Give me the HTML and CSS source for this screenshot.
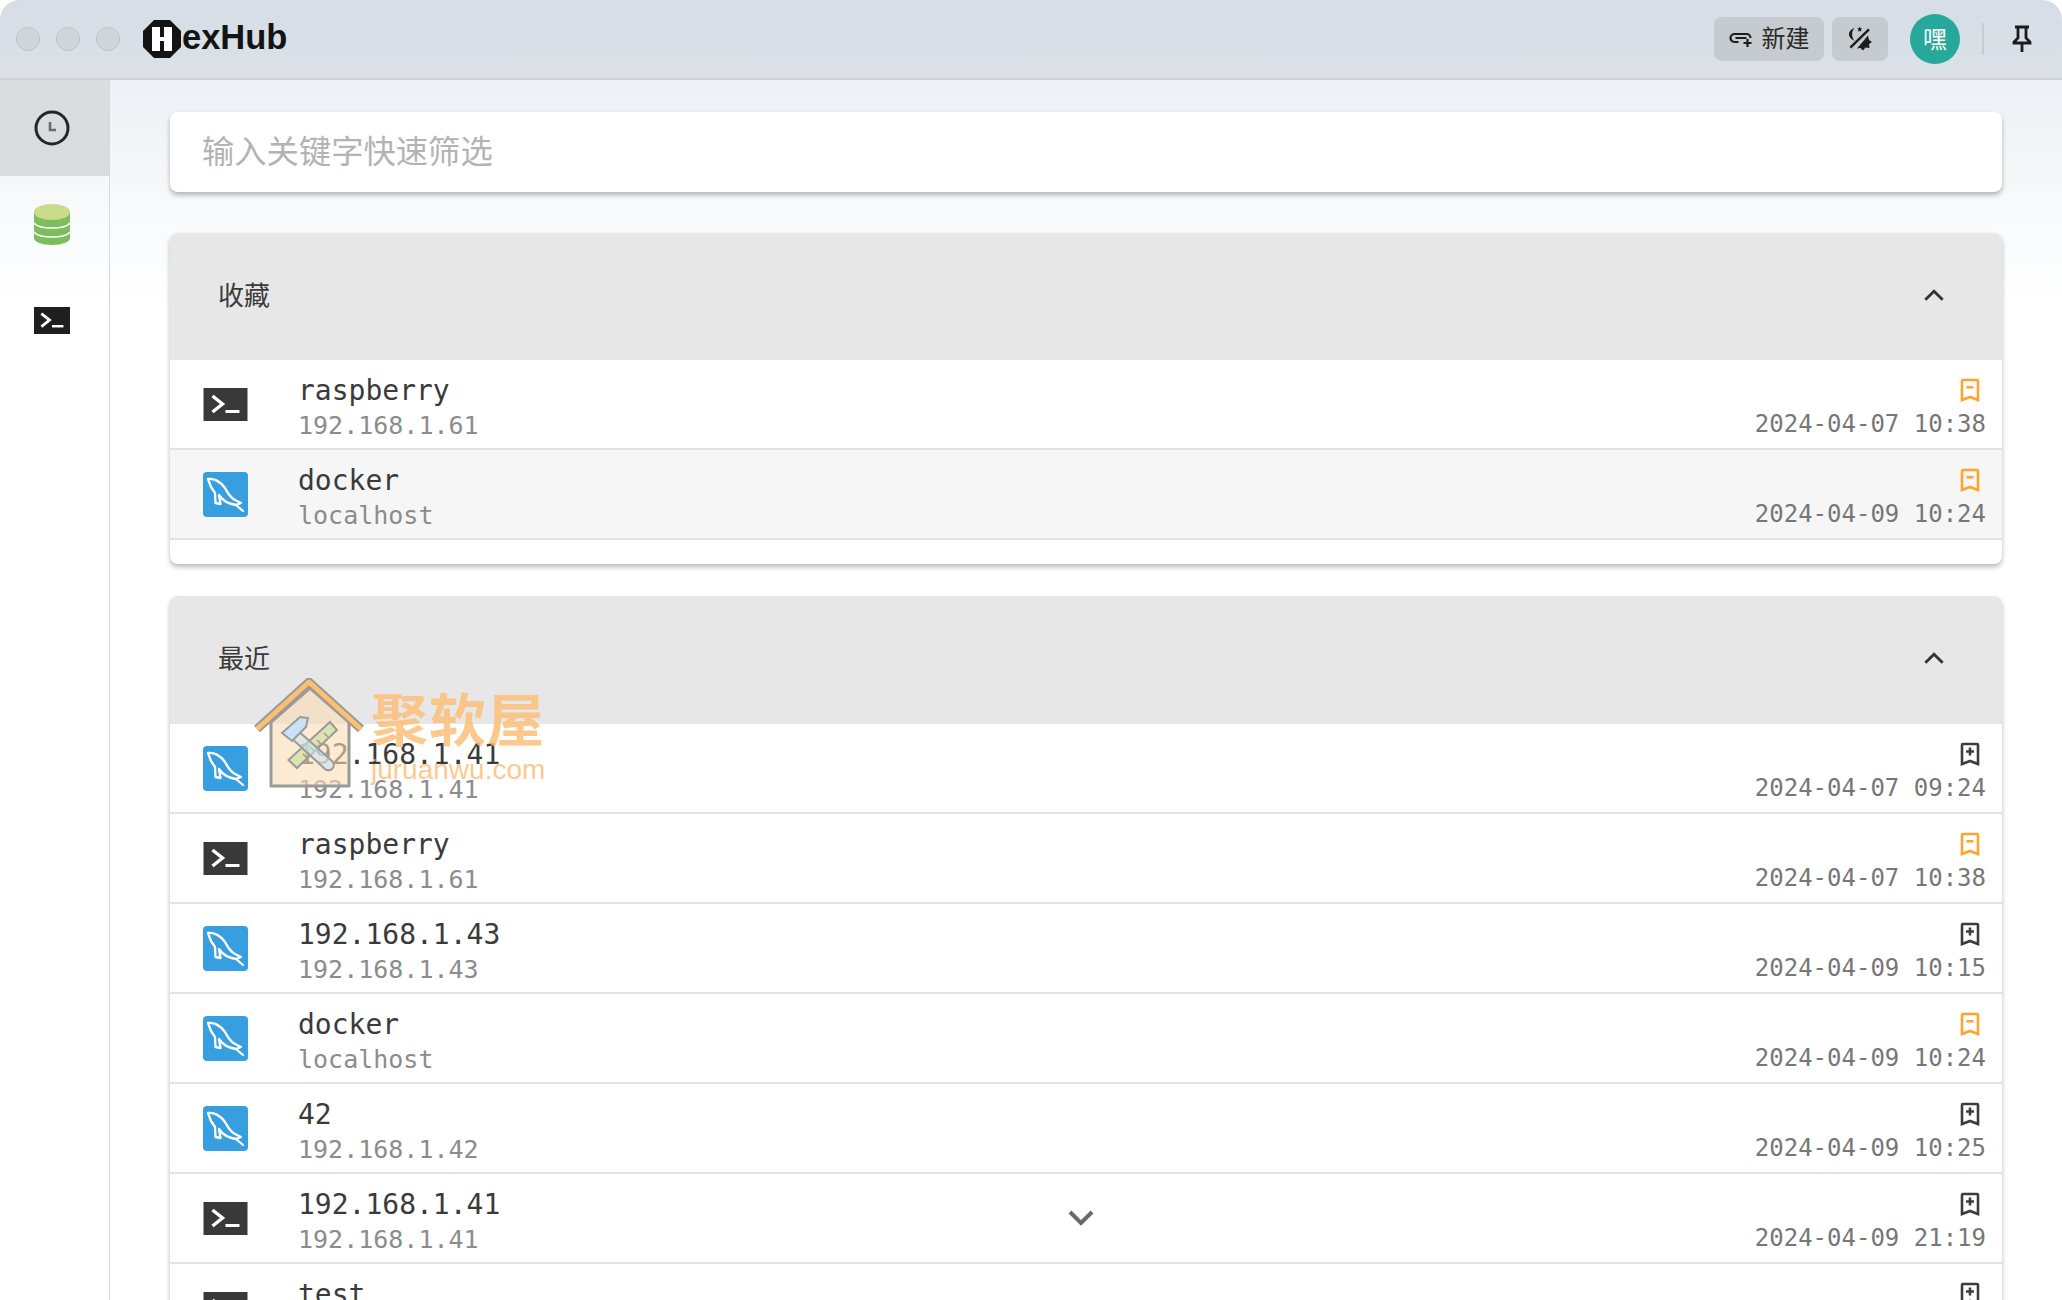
FILE: index.html
```html
<!DOCTYPE html>
<html lang="en">
  <head>
    <meta charset="UTF-8" />
    <title>HexHub</title>
    <link rel="stylesheet" href="styles.css">
  </head>
  <body>
    <svg class="defs" width="0" height="0">
      <symbol id="i-term" viewBox="0 0 44 33">
        <rect width="44" height="33" fill="currentColor"/>
        <path d="M9 8l10 8-10 8" fill="none" stroke="#fff" stroke-width="3.400"/>
        <rect x="22" y="22" width="14" height="3" fill="#fff"/>
      </symbol>
      <symbol id="i-mysql" viewBox="0 0 45 45">
        <rect width="45" height="45" rx="4" fill="#379fdf"/>
        <path d="M5 7C11 6 18 10 22 16C25 21 27 26 33 28.500L38 31L33 33L40 39M5 7L8 15L12 21L12.500 31L17.500 32L16 23C20 29 26 32 33 33" fill="none" stroke="#fff" stroke-width="2.300" stroke-linejoin="round" stroke-linecap="round"/>
      </symbol>
      <symbol id="i-unmark" viewBox="0 0 20 24">
        <path d="M2 22V3q0-1 1-1h14q1 0 1 1v19l-8-3z" fill="none" stroke="#ffa42e" stroke-width="2.600"/>
        <rect x="6.500" y="8" width="7" height="2.600" fill="#ffa42e"/>
      </symbol>
      <symbol id="i-mark" viewBox="0 0 20 24">
        <path d="M2 22V3q0-1 1-1h14q1 0 1 1v19l-8-3z" fill="none" stroke="#3c3c3c" stroke-width="2.600"/>
        <path d="M6 9.500h8M10 5.500v8" stroke="#3c3c3c" stroke-width="2.600"/>
      </symbol>
    </svg>

    <div class="window">
      <header class="titlebar">
        <div class="traffic">
          <span class="dot"></span>
          <span class="dot"></span>
          <span class="dot"></span>
        </div>
        <div class="brand">
          <svg class="brand-mark" viewBox="0 0 38 38" width="38" height="38">
            <path d="M11 0h16l11 11v16L27 38H11L0 27V11z" fill="#141414"/>
            <path d="M9 7h8v10h4V7h8v24h-8V21h-4v10H9z" fill="#fff"/>
          </svg>
          <span class="brand-name">exHub</span>
        </div>
        <div class="actions">
          <button class="tool-btn new-btn">
            <svg width="25" height="18" viewBox="0 0 24 18" fill="none" stroke="#1c1c1c" stroke-width="2.200">
              <path d="M9 12H5a4 4 0 0 1 0-8h12a4 4 0 0 1 4 4"/>
              <path d="M6 8h11M18 9v8M14 13h8"/>
            </svg>
            <span>新建</span>
          </button>
          <button class="tool-btn theme-btn">
            <svg width="26" height="26" viewBox="0 0 26 26">
              <path d="M3.300 21.700L22 3.300" stroke="#1c1c1c" stroke-width="2.400" fill="none"/>
              <path d="M7.700 1.700C1 4 -1 11 7.700 15C4 11 4.500 5 7.700 1.700z" fill="#1c1c1c"/>
              <path d="M12.700 .5l.8 1.800 1.800.2-1.400 1.200.5 2-1.700-1-1.700 1 .5-2-1.400-1.200 1.800-.2z" fill="#1c1c1c"/>
              <path d="M21 9.500L22 14L25 16L22 18L22.500 22L18.500 21.500L16 24.500L13.500 22L10 22.500z" fill="#1c1c1c"/>
            </svg>
          </button>
          <span class="avatar"><span>嘿</span></span>
          <span class="vline"></span>
          <svg class="pin" width="20" height="28" viewBox="0 0 20 28" fill="none" stroke="#1c1c1c" stroke-width="2.800">
            <path d="M3 2h14M6 2v11l-4 4v1h16v-1l-4-4V2M10 18v9"/>
          </svg>
        </div>
      </header>

      <div class="body">
        <nav class="sidebar">
          <div class="side-item active">
            <svg width="36" height="36" viewBox="0 0 36 36" fill="none">
              <circle cx="18" cy="18" r="16" stroke="#262626" stroke-width="3"/>
              <path d="M16 12v8h6" stroke="#6a6a6a" stroke-width="2.600"/>
            </svg>
          </div>
          <div class="side-item">
            <svg width="36" height="41" viewBox="0 0 36 41">
              <path d="M0 7v27c0 4 8 7 18 7s18-3 18-7V7z" fill="#7dbd5c"/>
              <ellipse cx="18" cy="8" rx="18" ry="8" fill="#cadb8c"/>
              <path d="M0 19c3 4 10 5 18 5s15-1 18-5M0 28c3 4 10 5 18 5s15-1 18-5" fill="none" stroke="#fff" stroke-width="1.500"/>
            </svg>
          </div>
          <div class="side-item">
            <svg class="side-term" width="36" height="27"><use href="#i-term"/></svg>
          </div>
        </nav>

        <main class="content">
          <div class="search">
            <input class="search-input" type="text" placeholder="输入关键字快速筛选" />
          </div>

          <section class="group fav">
            <div class="group-head">
              <span>收藏</span>
              <svg class="chev" width="22" height="13" viewBox="0 0 20 12" fill="none" stroke="#333" stroke-width="2.600"><path d="M2 10l8-8 8 8"/></svg>
            </div>
            <div class="row">
              <svg class="type-icon"><use href="#i-term" y="6" height="33"/></svg>
              <div class="names"><div class="name">raspberry</div><div class="host">192.168.1.61</div></div>
              <div class="meta"><svg class="mark"><use href="#i-unmark"/></svg><div class="time">2024-04-07 10:38</div></div>
            </div>
            <div class="row hover">
              <svg class="type-icon"><use href="#i-mysql"/></svg>
              <div class="names"><div class="name">docker</div><div class="host">localhost</div></div>
              <div class="meta"><svg class="mark"><use href="#i-unmark"/></svg><div class="time">2024-04-09 10:24</div></div>
            </div>
          </section>

          <section class="group recent">
            <div class="group-head">
              <span>最近</span>
              <svg class="chev" width="22" height="13" viewBox="0 0 20 12" fill="none" stroke="#333" stroke-width="2.600"><path d="M2 10l8-8 8 8"/></svg>
            </div>
            <div class="row">
              <svg class="type-icon"><use href="#i-mysql"/></svg>
              <div class="names"><div class="name">192.168.1.41</div><div class="host">192.168.1.41</div></div>
              <div class="meta"><svg class="mark"><use href="#i-mark"/></svg><div class="time">2024-04-07 09:24</div></div>
            </div>
            <div class="row">
              <svg class="type-icon"><use href="#i-term" y="6" height="33"/></svg>
              <div class="names"><div class="name">raspberry</div><div class="host">192.168.1.61</div></div>
              <div class="meta"><svg class="mark"><use href="#i-unmark"/></svg><div class="time">2024-04-07 10:38</div></div>
            </div>
            <div class="row">
              <svg class="type-icon"><use href="#i-mysql"/></svg>
              <div class="names"><div class="name">192.168.1.43</div><div class="host">192.168.1.43</div></div>
              <div class="meta"><svg class="mark"><use href="#i-mark"/></svg><div class="time">2024-04-09 10:15</div></div>
            </div>
            <div class="row">
              <svg class="type-icon"><use href="#i-mysql"/></svg>
              <div class="names"><div class="name">docker</div><div class="host">localhost</div></div>
              <div class="meta"><svg class="mark"><use href="#i-unmark"/></svg><div class="time">2024-04-09 10:24</div></div>
            </div>
            <div class="row">
              <svg class="type-icon"><use href="#i-mysql"/></svg>
              <div class="names"><div class="name">42</div><div class="host">192.168.1.42</div></div>
              <div class="meta"><svg class="mark"><use href="#i-mark"/></svg><div class="time">2024-04-09 10:25</div></div>
            </div>
            <div class="row">
              <svg class="type-icon"><use href="#i-term" y="6" height="33"/></svg>
              <div class="names"><div class="name">192.168.1.41</div><div class="host">192.168.1.41</div></div>
              <div class="meta"><svg class="mark"><use href="#i-mark"/></svg><div class="time">2024-04-09 21:19</div></div>
            </div>
            <div class="row">
              <svg class="type-icon"><use href="#i-term" y="6" height="33"/></svg>
              <div class="names"><div class="name">test</div><div class="host">192.168.1.41</div></div>
              <div class="meta"><svg class="mark"><use href="#i-mark"/></svg><div class="time">2024-04-09 21:20</div></div>
            </div>
          </section>
        </main>
      </div>

      <svg class="scroll-more" width="28" height="18" viewBox="0 0 28 18" fill="none" stroke="#6a6a6a" stroke-width="4"><path d="M3 3l11 11L25 3"/></svg>

      <div class="watermark">
        <svg class="wm-house" width="116" height="112" viewBox="0 0 116 112">
          <path d="M19 44v64h78V44L58 10z" fill="#fbdcb4" fill-opacity=".6" stroke="#9a9a9a" stroke-width="3" stroke-linejoin="round"/>
          <path d="M5 51L57 4l52 47" fill="none" stroke="#9a9a9a" stroke-width="9" stroke-linejoin="round"/>
          <path d="M5 51L57 4l52 47" fill="none" stroke="#fdbf70" stroke-width="5" stroke-linejoin="round"/>
          <path d="M78 44l7 8-40 38-8.500-8z" fill="#c4dd96" fill-opacity=".6" stroke="#9a9a9a" stroke-width="2"/>
          <path d="M72 55l4 4M65 62l4 4M58 69l4 4M51 76l4 4" stroke="#9a9a9a" stroke-width="1.500"/>
          <path d="M44 51l36 32a5 5 0 0 1-7 8L37 58z" fill="#c9e3f5" fill-opacity=".6" stroke="#9a9a9a" stroke-width="2"/>
          <path d="M30 55l18-16 8 1-2 9-14 14z" fill="#c9e3f5" stroke="#9a9a9a" stroke-width="2"/>
        </svg>
        <div class="wm-text">
          <div class="wm-cn">聚软屋</div>
          <div class="wm-en">juruanwu.com</div>
        </div>
      </div>
    </div>
  </body>
</html>
```

FILE: styles.css
```css
html,
body {
  height: 100%;
  margin: 0;
}

body {
  background-color: #fff;
  overflow: hidden;
  font-family: "Noto Sans CJK SC", "Noto Sans", sans-serif;
}

.defs {
  position: absolute;
}

.window {
  position: relative;
  height: 1300px;
  overflow: hidden;
  border-radius: 20px 20px 0 0;
  background: linear-gradient(#edf1f5 80px, #ffffff 300px);
}

.titlebar {
  display: flex;
  align-items: center;
  height: 78px;
  padding: 0 30px 0 16px;
  background: linear-gradient(#d6dde5, #dbe1e7);
  border-bottom: 2px solid #d2d2d2;
}

.traffic {
  display: flex;
  gap: 16px;
}

.dot {
  width: 24px;
  height: 24px;
  box-sizing: border-box;
  border-radius: 50%;
  background-color: #d0d5d9;
  border: 1px solid #bcc2c6;
}

.brand {
  display: flex;
  align-items: center;
  margin-left: 23px;
}

.brand-name {
  margin: 0 0 3px 1px;
  font-family: "Liberation Sans", sans-serif;
  font-size: 34.500px;
  font-weight: 700;
  color: #141414;
}

.actions {
  display: flex;
  align-items: center;
  margin-left: auto;
}

.tool-btn {
  display: flex;
  align-items: center;
  justify-content: center;
  height: 44px;
  border: none;
  border-radius: 8px;
  background-color: #c5cbce;
  color: #2a2a2a;
  font-family: inherit;
  font-size: 24px;
}

.new-btn {
  gap: 8px;
  width: 110px;
  padding: 0;
}

.new-btn span {
  margin-bottom: 5px;
}

.theme-btn {
  width: 56px;
  margin-left: 8px;
  padding: 0;
}

.avatar {
  display: flex;
  align-items: center;
  justify-content: center;
  width: 50px;
  height: 50px;
  margin-left: 22px;
  border-radius: 50%;
  background-color: #26a99a;
  color: #fff;
  font-size: 24px;
}

.avatar span {
  margin-bottom: 4px;
}

.vline {
  width: 2px;
  height: 32px;
  margin: 0 28px 0 22px;
  background-color: #c8cccf;
}

.body {
  display: flex;
  height: 1220px;
}

.sidebar {
  flex: none;
  width: 109px;
  border-right: 1px solid #d9d9d9;
}

.side-item {
  display: flex;
  align-items: center;
  justify-content: center;
  height: 96px;
  padding-right: 5px;
  box-sizing: border-box;
}

.side-item.active {
  background-color: #dadde0;
}

.side-term {
  color: #1f1f1f;
}

.content {
  flex: 1;
  padding: 32px 60px 0 60px;
  min-width: 0;
}

.search {
  height: 80px;
  margin-bottom: 41px;
  border-radius: 8px;
  background-color: #fff;
  box-shadow: 0 3px 5px rgba(0, 0, 0, 0.28);
}

.search-input {
  width: 100%;
  height: 100%;
  box-sizing: border-box;
  padding: 0 32px 7px;
  border: none;
  outline: none;
  background: transparent;
  font-family: inherit;
  font-size: 32.300px;
}

.search-input::placeholder {
  color: #b3b3b3;
}

.group {
  margin-bottom: 32px;
  padding-bottom: 24px;
  border-radius: 8px;
  background-color: #fff;
  box-shadow: 0 3px 5px rgba(0, 0, 0, 0.28);
}

.group-head {
  display: flex;
  align-items: center;
  justify-content: space-between;
  box-sizing: border-box;
  height: 127px;
  padding: 0 57px 7px 48px;
  border-radius: 8px 8px 0 0;
  background-color: #e7e7e7;
  font-size: 26px;
  color: #3a3a3a;
}

.recent .group-head {
  height: 128px;
}

.chev {
  margin-top: 4px;
}

.row {
  display: flex;
  align-items: center;
  box-sizing: border-box;
  height: 90px;
  padding: 0 16px 0 33px;
  border-bottom: 2px solid #e2e2e2;
}

.row.hover {
  background-color: #f6f6f6;
}

.type-icon {
  flex: none;
  width: 45px;
  height: 45px;
  color: #393939;
}

.names {
  margin: 8px 0 0 50px;
  font-family: "DejaVu Sans Mono", monospace;
}

.name {
  font-size: 28px;
  line-height: 36px;
  color: #3a3a3a;
}

.host {
  font-size: 25px;
  line-height: 34px;
  color: #8c8c8c;
}

.meta {
  margin: 10px 0 0 auto;
  display: flex;
  flex-direction: column;
  align-items: flex-end;
  font-family: "DejaVu Sans Mono", monospace;
}

.mark {
  width: 20px;
  height: 24px;
  margin: 0 6px 6px 0;
}

.time {
  font-size: 24px;
  line-height: 32px;
  color: #777;
}

/* floats over the list */
.scroll-more {
  position: absolute;
  left: 1067px;
  top: 1209px;
}

.watermark {
  position: absolute;
  left: 252px;
  top: 678px;
  display: flex;
  pointer-events: none;
}

.wm-text {
  margin-left: 3px;
  padding-top: 6px;
  color: rgba(253, 190, 120, 0.85);
}

.wm-cn {
  font-size: 57px;
  font-weight: 700;
  line-height: 64px;
  letter-spacing: 1px;
}

.wm-en {
  margin-top: 8px;
  font-family: "Liberation Sans", sans-serif;
  font-size: 28px;
  line-height: 28px;
}
```
